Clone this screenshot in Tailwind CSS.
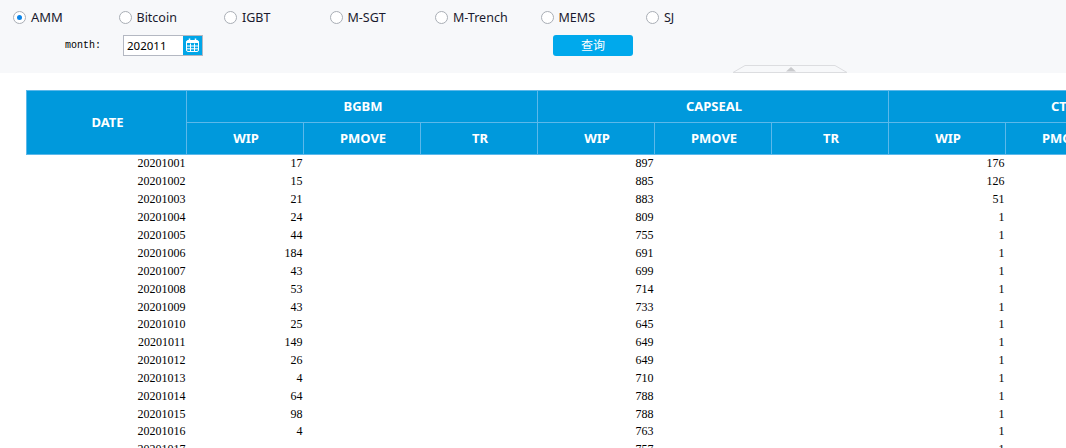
<!DOCTYPE html>
<html lang="zh-CN">
<head>
  <meta charset="UTF-8" />
  <title>WIP report</title>
  <script src="https://cdn.jsdelivr.net/npm/@tailwindcss/browser@4"></script>
</head>
<body class="bg-white h-[448px] overflow-hidden font-['Noto_Sans','Noto_Sans_CJK_SC',sans-serif]">

  <!-- Filter bar -->
  <div class="relative h-[73px] bg-[#f7f8fa] pl-[13px] pt-[10px]">
    <div class="flex h-[15px] items-center text-[12.5px] text-[#1a1a2e]">
      <label class="flex w-[105.5px] items-center gap-[5px]">
        <span class="flex size-[13px] items-center justify-center rounded-full border border-[#a9aeb5] bg-white"><span class="size-[5px] rounded-full bg-[#0a84e8]"></span></span><span class="text-[13px]">AMM</span>
      </label>
      <label class="flex w-[105.5px] items-center gap-[5px]"><span class="size-[13px] rounded-full border border-[#a9aeb5] bg-white"></span><span class="pt-[2px]">Bitcoin</span></label>
      <label class="flex w-[105.5px] items-center gap-[5px]"><span class="size-[13px] rounded-full border border-[#a9aeb5] bg-white"></span><span class="pt-[2px]">IGBT</span></label>
      <label class="flex w-[105.5px] items-center gap-[5px]"><span class="size-[13px] rounded-full border border-[#a9aeb5] bg-white"></span><span class="pt-[2px]">M-SGT</span></label>
      <label class="flex w-[105.5px] items-center gap-[5px]"><span class="size-[13px] rounded-full border border-[#a9aeb5] bg-white"></span><span class="pt-[2px]">M-Trench</span></label>
      <label class="flex w-[105.5px] items-center gap-[5px]"><span class="size-[13px] rounded-full border border-[#a9aeb5] bg-white"></span><span class="pt-[2px]">MEMS</span></label>
      <label class="flex w-[105.5px] items-center gap-[5px]"><span class="size-[13px] rounded-full border border-[#a9aeb5] bg-white"></span><span class="pt-[2px]">SJ</span></label>
    </div>
    <div class="mt-[10px] flex h-[21px] items-center">
      <span class="ml-[52px] w-[58px] font-['Liberation_Mono',monospace] text-[10px] text-black">month:</span>
      <div class="flex h-[21px] w-[80px] border border-[#b4b8c2] bg-white">
        <span class="flex-1 pl-[3px] text-[11.5px] leading-[20px] text-black">202011</span>
        <span class="flex w-[19px] items-center justify-center bg-[#00a6e8]">
          <svg width="15" height="15" viewBox="0 0 15 15" fill="none" stroke="#fff" stroke-width="1">
            <rect x="1.5" y="2.5" width="12" height="11" rx="1.5"/>
            <path d="M1.5 4h12" stroke-width="2"/>
            <path d="M1.5 8h12M1.5 10.8h12M5.5 5.5v8M9.5 5.5v8"/>
            <path d="M4.5 0.5v3M10.5 0.5v3" stroke-width="1.5"/>
          </svg>
        </span>
      </div>
      <button class="ml-[350px] h-[21px] w-[80px] rounded-[3px] bg-[#00a9ec] text-[12px] text-white">查询</button>
    </div>
    <!-- collapse handle -->
    <div class="absolute bottom-0 left-[733px] h-[8px] w-[114px]">
      <svg width="114" height="8" viewBox="0 0 114 8" fill="none">
        <path d="M0 7.5L12 0.5H102L114 7.5Z" stroke="#dcdde0" fill="#f7f8fa"/>
        <path d="M53 6.5L58 2L63 6.5Z" fill="#c9cacd"/>
      </svg>
    </div>
  </div>

  <!-- Table -->
  <div class="ml-[26px] mt-[17px] overflow-hidden">
    <table class="w-[1214px] table-fixed border-collapse text-[13px] font-bold text-white">
      <colgroup>
        <col class="w-[160px]" />
        <col class="w-[117px]" /><col class="w-[117px]" /><col class="w-[117px]" />
        <col class="w-[117px]" /><col class="w-[117px]" /><col class="w-[117px]" />
        <col class="w-[117px]" /><col class="w-[117px]" /><col class="w-[117px]" />
      </colgroup>
      <thead class="bg-[#0099dc]">
        <tr class="h-[32px]">
          <th rowspan="2" class="border border-[#5cb8ea] pl-[2px]">DATE</th>
          <th colspan="3" class="border border-[#5cb8ea] pl-[2px]">BGBM</th>
          <th colspan="3" class="border border-[#5cb8ea] pl-[2px]">CAPSEAL</th>
          <th colspan="3" class="border border-[#5cb8ea] pl-[2px]">CTM</th>
        </tr>
        <tr class="h-[32px]">
          <th class="border border-[#5cb8ea] pl-[2px]">WIP</th><th class="border border-[#5cb8ea] pl-[2px]">PMOVE</th><th class="border border-[#5cb8ea] pl-[2px]">TR</th>
          <th class="border border-[#5cb8ea] pl-[2px]">WIP</th><th class="border border-[#5cb8ea] pl-[2px]">PMOVE</th><th class="border border-[#5cb8ea] pl-[2px]">TR</th>
          <th class="border border-[#5cb8ea] pl-[2px]">WIP</th><th class="border border-[#5cb8ea] pl-[2px]">PMOVE</th><th class="border border-[#5cb8ea] pl-[2px]">TR</th>
        </tr>
      </thead>
      <tbody id="rows" class="text-right font-['Liberation_Serif',serif] text-[12px] font-normal text-black"></tbody>
    </table>
  </div>

<script>
  // date, BGBM WIP, CAPSEAL WIP, CT WIP
  const data = [
    ['20201001', 17, 897, 176], ['20201002', 15, 885, 126], ['20201003', 21, 883, 51],
    ['20201004', 24, 809, 1], ['20201005', 44, 755, 1], ['20201006', 184, 691, 1],
    ['20201007', 43, 699, 1], ['20201008', 53, 714, 1], ['20201009', 43, 733, 1],
    ['20201010', 25, 645, 1], ['20201011', 149, 649, 1], ['20201012', 26, 649, 1],
    ['20201013', 4, 710, 1], ['20201014', 64, 788, 1], ['20201015', 98, 788, 1],
    ['20201016', 4, 763, 1], ['20201017', '', 757, 1]
  ];
  // rows are 18px with a shorter one now and then, same as the source table
  document.getElementById('rows').innerHTML = data.map((r, i) => `
    <tr class="${i == 8 || i == 14 ? 'h-[17px]' : 'h-[18px]'}">
      <td class="pr-px align-top leading-[17px]">${r[0]}</td>
      <td class="pr-px align-top leading-[17px]">${r[1]}</td><td></td><td></td>
      <td class="pr-px align-top leading-[17px]">${r[2]}</td><td></td><td></td>
      <td class="pr-px align-top leading-[17px]">${r[3]}</td><td></td><td></td>
    </tr>`).join('');
</script>
</body>
</html>
